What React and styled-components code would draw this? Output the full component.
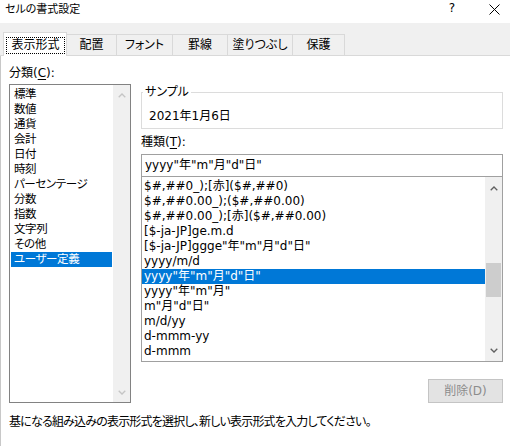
import React from "react";
import styled, { createGlobalStyle } from "styled-components";

const categories = [
  "標準",
  "数値",
  "通貨",
  "会計",
  "日付",
  "時刻",
  "パーセンテージ",
  "分数",
  "指数",
  "文字列",
  "その他",
  "ユーザー定義",
];

const formats = [
  '$#,##0_);[赤]($#,##0)',
  '$#,##0.00_);($#,##0.00)',
  '$#,##0.00_);[赤]($#,##0.00)',
  "[$-ja-JP]ge.m.d",
  '[$-ja-JP]ggge"年"m"月"d"日"',
  "yyyy/m/d",
  'yyyy"年"m"月"d"日"',
  'yyyy"年"m"月"',
  'm"月"d"日"',
  "m/d/yy",
  "d-mmm-yy",
  "d-mmm",
];

const tabs = [
  { label: "表示形式", width: 64 },
  { label: "配置", width: 50 },
  { label: "フォント", width: 56 },
  { label: "罫線", width: 55 },
  { label: "塗りつぶし", width: 65 },
  { label: "保護", width: 52 },
];

function Chevron({ down, color }) {
  return (
    <svg width="8" height="5" viewBox="0 0 8 5">
      <polyline
        points={down ? "0.7,0.8 4,4 7.3,0.8" : "0.7,4.2 4,1 7.3,4.2"}
        fill="none"
        stroke={color}
        strokeWidth="1.3"
      />
    </svg>
  );
}

export default function App() {
  return (
    <Dialog>
      <GlobalStyle />
      <TitleBar>
        <span>セルの書式設定</span>
        <TitleButtons>
          <span>?</span>
          <svg width="11" height="11" viewBox="0 0 11 11">
            <path d="M0.5 0.5 L10.5 10.5 M10.5 0.5 L0.5 10.5" stroke="#000" strokeWidth="1" />
          </svg>
        </TitleButtons>
      </TitleBar>

      <TabStrip>
        {tabs.map((t, i) => (
          <Tab key={t.label} $active={i === 0} $width={t.width}>
            {i === 0 ? <FocusLabel>{t.label}</FocusLabel> : t.label}
          </Tab>
        ))}
      </TabStrip>

      <Page>
        <Main>
          <LeftColumn>
            <FieldLabel>
              分類(<u>C</u>):
            </FieldLabel>
            <ListBox $height={319} $border="#828282">
              <Items $pad={1} $size={11.5} $spacing={-0.4}>
                {categories.map((c, i) => (
                  <Item key={c} $selected={i === 11} $text={3}>
                    {c}
                  </Item>
                ))}
              </Items>
              <ScrollBar>
                <ArrowButton $h={20}>
                  <Chevron color="#c5c5c5" />
                </ArrowButton>
                <Track />
                <ArrowButton $h={20}>
                  <Chevron down color="#c5c5c5" />
                </ArrowButton>
              </ScrollBar>
            </ListBox>
          </LeftColumn>

          <RightColumn>
            <Group>
              <legend>サンプル</legend>
              <SampleText>2021年1月6日</SampleText>
            </Group>
            <FieldLabel $top={6}>
              種類(<u>T</u>):
            </FieldLabel>
            <TextInput>yyyy"年"m"月"d"日"</TextInput>
            <ListBox $height={186} $border="#a0a0a0">
              <Items $pad={0} $size={12} $spacing={0}>
                {formats.map((f, i) => (
                  <Item key={f} $selected={i === 6} $text={2}>
                    {f}
                  </Item>
                ))}
              </Items>
              <ScrollBar>
                <ArrowButton $h={22}>
                  <Chevron color="#606060" />
                </ArrowButton>
                <Track>
                  <Thumb />
                </Track>
                <ArrowButton $h={22}>
                  <Chevron down color="#606060" />
                </ArrowButton>
              </ScrollBar>
            </ListBox>
            <ButtonRow>
              <DisabledButton disabled>削除(D)</DisabledButton>
            </ButtonRow>
          </RightColumn>
        </Main>
        <Hint>
          基になる組み込みの表示形式を選択し、新しい表示形式を入力してください。
        </Hint>
      </Page>
    </Dialog>
  );
}

const GlobalStyle = createGlobalStyle`
  *, *::before, *::after { box-sizing: border-box; }
  html, body {
    margin: 0;
    padding: 0;
    background: #fff;
  }
  body {
    font-family: "DejaVu Sans", "Noto Sans CJK JP", sans-serif;
    font-size: 12px;
    font-weight: 400;
    line-height: 15px;
    color: #000;
    font-feature-settings: "palt";
  }
`;

const Dialog = styled.div`
  width: 510px;
  height: 446px;
  display: flex;
  flex-direction: column;
  background: #fff;
  overflow: hidden;
`;

const TitleBar = styled.div`
  height: 23px;
  display: flex;
  align-items: flex-start;
  justify-content: space-between;
  padding: 2px 0 0 5px;
  font-size: 11px;
`;

const TitleButtons = styled.div`
  display: flex;
  align-items: center;
  gap: 34px;
  padding-right: 10px;
  margin-top: -1px;
  font-size: 12px;
  svg {
    margin-top: 1px;
  }
`;

const TabStrip = styled.div`
  height: 33px;
  display: flex;
  align-items: flex-end;
  padding-left: 3px;
  background: #f0f0f0;
  border-bottom: 1px solid #d9d9d9;
`;

const Tab = styled.div`
  width: ${(p) => p.$width}px;
  height: ${(p) => (p.$active ? 24 : 21)}px;
  margin-bottom: ${(p) => (p.$active ? -1 : 0)}px;
  display: flex;
  align-items: center;
  justify-content: center;
  padding-top: ${(p) => (p.$active ? 0 : 1)}px;
  background: ${(p) => (p.$active ? "#fff" : "#f0f0f0")};
  border-top: 1px solid #d9d9d9;
  border-right: 1px solid #d9d9d9;
  border-left: ${(p) => (p.$active ? "1px solid #d9d9d9" : "none")};
  white-space: nowrap;
`;

const FocusLabel = styled.span`
  display: block;
  border: 1px dotted #000;
  padding: 0 4px;
  line-height: 15px;
  margin-left: 1px;
  margin-top: 2px;
`;

const Page = styled.div`
  flex: 1;
  display: flex;
  flex-direction: column;
  padding: 10px 7px 0 8px;
  border-left: 1px solid #c8c8c8;
`;

const Main = styled.div`
  display: grid;
  grid-template-columns: 122px 362px;
  column-gap: 10px;
  align-items: start;
`;

const LeftColumn = styled.div`
  display: flex;
  flex-direction: column;
`;

const RightColumn = styled.div`
  display: flex;
  flex-direction: column;
  margin-top: 19px;
`;

const FieldLabel = styled.div`
  margin-top: ${(p) => p.$top || 0}px;
  margin-bottom: ${(p) => (p.$top ? 4 : 3)}px;
  u {
    text-underline-offset: 2px;
  }
`;

const ListBox = styled.div`
  height: ${(p) => p.$height}px;
  display: flex;
  border: 1px solid ${(p) => p.$border};
  background: #fff;
`;

const Items = styled.div`
  flex: 1;
  padding: 2px ${(p) => p.$pad}px 0;
  overflow: hidden;
  font-size: ${(p) => p.$size}px;
  letter-spacing: ${(p) => p.$spacing}px;
`;

const Item = styled.div`
  height: 15px;
  line-height: 15px;
  padding-left: ${(p) => p.$text}px;
  white-space: nowrap;
  background: ${(p) => (p.$selected ? "#0078d7" : "transparent")};
  color: ${(p) => (p.$selected ? "#fff" : "#000")};
`;

const ScrollBar = styled.div`
  width: 17px;
  display: flex;
  flex-direction: column;
  background: #f0f0f0;
`;

const ArrowButton = styled.div`
  height: ${(p) => p.$h}px;
  display: flex;
  align-items: center;
  justify-content: center;
`;

const Track = styled.div`
  flex: 1;
  display: flex;
  flex-direction: column;
`;

const Thumb = styled.div`
  height: 34px;
  margin: 64px 1px 0;
  background: #cdcdcd;
`;

const Group = styled.fieldset`
  margin: 0;
  padding: 9px 6px 4px 7px;
  border: 1px solid #dcdcdc;
  legend {
    padding: 0 2px;
    margin-left: -6px;
    line-height: 15px;
  }
`;

const SampleText = styled.div`
  line-height: 15px;
`;

const TextInput = styled.div`
  height: 22px;
  padding: 0 3px;
  display: flex;
  align-items: center;
  border: 1px solid #a0a0a0;
  border-bottom: none;
  white-space: nowrap;
`;

const ButtonRow = styled.div`
  display: flex;
  justify-content: flex-end;
  margin-top: 17px;
`;

const DisabledButton = styled.button`
  width: 75px;
  height: 24px;
  padding: 0;
  font: inherit;
  font-size: 12px;
  color: #8c8c8c;
  background: #e3e3e3;
  border: 1px solid #c4c4c4;
  border-radius: 0;
`;

const Hint = styled.div`
  margin-top: 12px;
  white-space: nowrap;
  letter-spacing: -0.8px;
`;
